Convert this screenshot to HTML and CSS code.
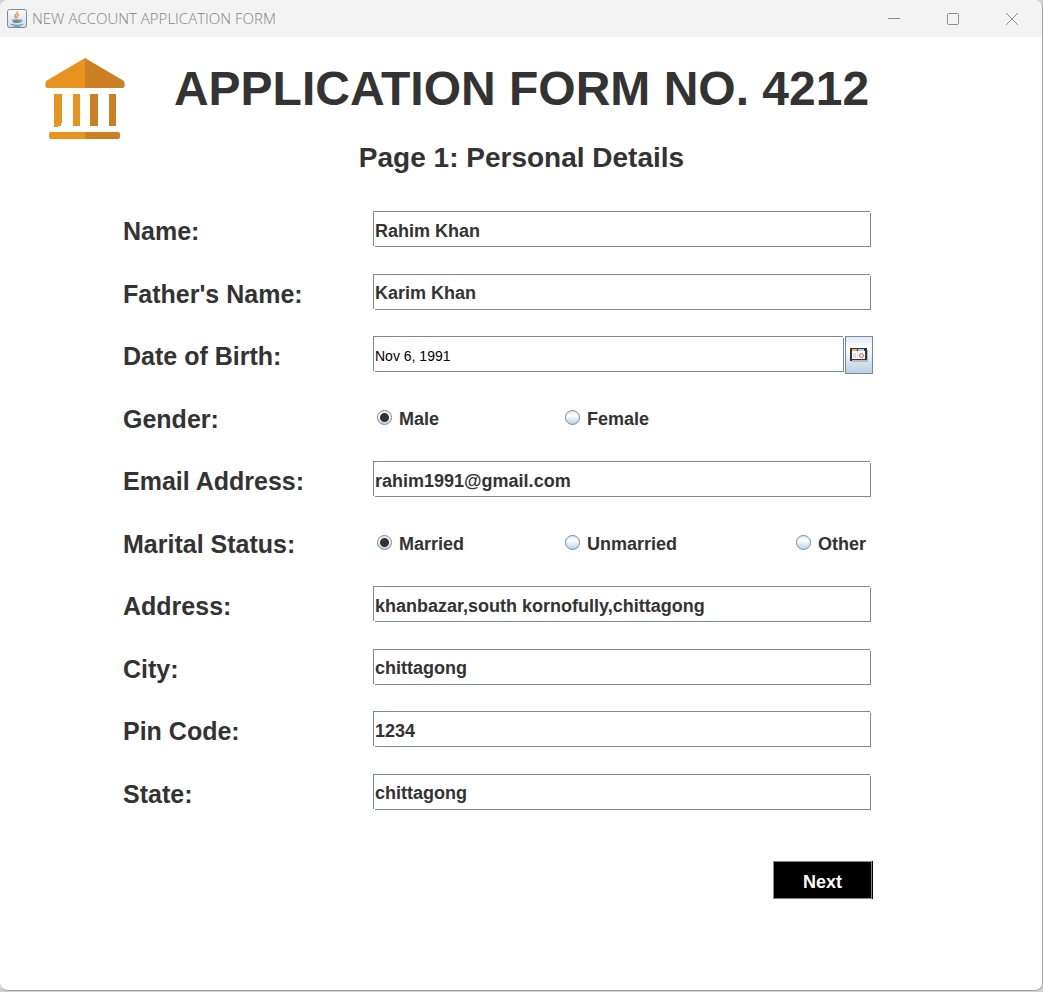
FILE: index.html
```html
<!DOCTYPE html>
<html lang="en">
<head>
<meta charset="utf-8">
<title>New Account Application Form</title>
<link rel="stylesheet" href="styles.css">
</head>
<body>
<div class="window">
  <header class="titlebar">
    <svg class="app-icon" viewBox="0 0 20 20" aria-hidden="true">
      <defs><linearGradient id="tile" x1="0" y1="0" x2="0" y2="1"><stop offset="0" stop-color="#fdfdfd"/><stop offset="1" stop-color="#cfdbe4"/></linearGradient></defs>
      <rect x=".5" y=".5" width="19" height="18" rx="2" fill="url(#tile)" stroke="#6f8da8"/>
      <path d="M10.5 2.5c1 2-3.500 3-2.500 5 .4 1 1.400 1.500 1.400 2.200M12.300 5.500c-2.300 1-2.500 2-1.700 3" fill="none" stroke="#f0923c" stroke-width="1.500"/>
      <path d="M5.500 10.500h8v1.200c0 1.500-1.500 2.300-4 2.300s-4-.8-4-2.300z" fill="#6b8ba5"/>
      <path d="M13.500 11c2.500-.6 2.300 1.700-.7 2.200M4 15.300c3 1.300 9 1.300 12 0M6.500 17c2 .5 5 .5 7 0" fill="none" stroke="#6b8ba5"/>
    </svg>
    <span class="caption">NEW ACCOUNT APPLICATION FORM</span>
    <div class="controls">
      <button type="button" aria-label="Minimize"><svg viewBox="0 0 14 14"><path d="M1 6.500h12"/></svg></button>
      <button type="button" aria-label="Maximize"><svg viewBox="0 0 14 14"><rect x="1.500" y="1.500" width="11" height="11" rx="1"/></svg></button>
      <button type="button" aria-label="Close"><svg viewBox="0 0 14 14"><path d="M1 1l12 12M13 1L1 13"/></svg></button>
    </div>
  </header>
  <main>
    <div class="heading">
      <svg class="logo" viewBox="0 0 80 82" aria-hidden="true">
        <g fill="#e8921f"><path d="M40 0L1 23Q-1 30 3 30H40z"/><path d="M9 36h8v29h-1v3h-3v1H9zM28 36h7v32h-7z"/><path d="M40 74H6q-2 0-2 2v3q0 2 2 2h34z"/></g>
        <g fill="#cd8023"><path d="M40 0l39 23q2 7-2 7H40z"/><path d="M45 36h8v32h-8zM64 36h7v32h-7z"/><path d="M40 74h33q2 0 2 2v3q0 2-2 2H40z"/></g>
      </svg>
      <div class="titles">
        <h1>APPLICATION FORM NO. 4212</h1>
        <h2>Page 1: Personal Details</h2>
      </div>
    </div>
    <form>
      <div class="rows">
        <div class="row"><label class="name" for="name">Name:</label><input class="field" id="name" type="text" value="Rahim Khan"></div>
        <div class="row"><label class="name" for="father">Father's Name:</label><input class="field" id="father" type="text" value="Karim Khan"></div>
        <div class="row"><label class="name" for="dob">Date of Birth:</label>
          <div class="date"><input class="field plain" id="dob" type="text" value="Nov 6, 1991">
            <button class="pick" type="button" aria-label="Choose date">
              <svg viewBox="0 0 18 14" shape-rendering="crispEdges"><path fill="#bbb" d="M2 2h16v12H2z"/><path fill="#333" d="M0 0h17v12H2v1H0z"/><path fill="#fff" d="M2 3h13v8H2z"/><path fill="#ffad33" d="M2 1h5v2H2z"/><path fill="#aecbfa" d="M8 1h6v2H8z"/><path fill="#ddd" d="M3 5h3v5H3zM7 4h1v6H7z"/><circle cx="11.500" cy="7.500" r="2" fill="none" stroke="#e85555" shape-rendering="auto"/></svg>
            </button></div></div>
        <div class="row" role="radiogroup" aria-labelledby="gender"><span class="name" id="gender">Gender:</span>
          <div class="options"><label><input type="radio" name="gender" checked><span>Male</span></label><label><input type="radio" name="gender"><span>Female</span></label></div></div>
        <div class="row"><label class="name" for="email">Email Address:</label><input class="field" id="email" type="email" value="rahim1991@gmail.com"></div>
        <div class="row" role="radiogroup" aria-labelledby="marital"><span class="name" id="marital">Marital Status:</span>
          <div class="options"><label><input type="radio" name="marital" checked><span>Married</span></label><label><input type="radio" name="marital"><span>Unmarried</span></label><label><input type="radio" name="marital"><span>Other</span></label></div></div>
        <div class="row"><label class="name" for="address">Address:</label><input class="field" id="address" type="text" value="khanbazar,south kornofully,chittagong"></div>
        <div class="row"><label class="name" for="city">City:</label><input class="field" id="city" type="text" value="chittagong"></div>
        <div class="row"><label class="name" for="pin">Pin Code:</label><input class="field" id="pin" type="text" value="1234"></div>
        <div class="row"><label class="name" for="state">State:</label><input class="field" id="state" type="text" value="chittagong"></div>
      </div>
      <button class="next" type="button">Next</button>
    </form>
  </main>
</div>
</body>
</html>
```
FILE: styles.css
```css
* { box-sizing: border-box; }
body {
  margin: 0;
  background: #d2d2d2;
  color: #333;
  font-family: "Liberation Sans", Arial, sans-serif;
}
.window {
  min-height: calc(100vh - 1px);
  border: solid #a3a3a3;
  border-width: 0 1px 1px 0;
  border-radius: 8px;
  background: #fff;
  overflow: hidden;
}
.titlebar {
  display: flex;
  align-items: center;
  height: 37px;
  padding-left: 7px;
  background: #f3f3f3;
}
.app-icon { width: 20px; height: 20px; }
.caption {
  margin-left: 5px;
  padding-bottom: 2px;
  color: #828282;
  font: 300 15px/20px "Open Sans", "Noto Sans", sans-serif;
}
.controls { display: flex; margin-left: auto; }
.controls button {
  display: grid;
  place-items: center;
  width: 59px;
  height: 36px;
  padding: 0 2px 0 0;
  border: 0;
  background: none;
}
.controls svg { width: 14px; height: 14px; fill: none; stroke: #8c8c8c; }

.heading {
  display: grid;
  grid-template-columns: 80px 1fr 80px;
  padding: 21px 44px 0 45px;
}
.logo { width: 80px; height: 82px; }
.titles { text-align: center; }
h1, h2 { margin: 0; white-space: nowrap; }
h1 { font-size: 48px; line-height: 62px; }
h2 { margin-top: 20px; font-size: 28px; line-height: 36px; }

form {
  display: flex;
  flex-direction: column;
  padding: 35px 169px 32px 123px;
}
.rows {
  display: grid;
  align-content: space-between;
  min-height: 599px;
}
.row {
  display: grid;
  grid-template-columns: 250px 1fr;
  height: 36px;
}
.name {
  padding-top: 4px;
  font-size: 25px;
  font-weight: bold;
  line-height: 32px;
}
.field {
  min-width: 0;
  height: 36px;
  margin: 0 2px 0 0;
  padding: 4px 2px 0;
  border: 0;
  outline: 0;
  border-radius: 0;
  color: #333;
  font: bold 18px "Liberation Sans", Arial, sans-serif;
  /* four edges, open at the bottom-left and top-right corners */
  background:
    linear-gradient(#7a8a99, #7a8a99) left top / calc(100% - 1px) 1px no-repeat,
    linear-gradient(#7a8a99, #7a8a99) left top / 1px calc(100% - 1px) no-repeat,
    linear-gradient(#7a8a99, #7a8a99) right bottom / calc(100% - 2px) 1px no-repeat,
    linear-gradient(#7a8a99, #7a8a99) right bottom / 1px calc(100% - 2px) no-repeat,
    #fff;
}
.date { display: flex; align-items: flex-start; }
.date .field { flex: 1; margin-right: 1px; }
.field.plain { color: #000; font-size: 14px; font-weight: normal; }
.pick {
  display: grid;
  place-items: center;
  width: 28px;
  height: 38px;
  padding: 0;
  border: 1px solid #7a8a99;
  background: linear-gradient(#dde8f3, #fff 30%, #b8cfe5);
}
.pick svg { width: 18px; height: 14px; }

.options {
  display: grid;
  grid-template-columns: 188px 231px auto;
  justify-content: start;
  padding: 2px 0 0 4px;
}
.options label { display: flex; align-items: center; white-space: nowrap; }
.options span { padding-top: 4px; font-size: 18px; font-weight: bold; }
.options input {
  appearance: none;
  width: 15px;
  height: 15px;
  margin: 0 7px 0 0;
  border: 1px solid #7a8a99;
  border-radius: 50%;
  background: linear-gradient(#dde8f3, #fff 35%, #b8cfe5);
}
.options input:checked {
  background:
    radial-gradient(circle, #333 4px, transparent 5px),
    linear-gradient(#dde8f3, #fff 35%, #b8cfe5);
}
.next {
  align-self: flex-end;
  width: 99px;
  height: 38px;
  margin: 51px 1px 0 0;
  padding: 4px 0 0;
  border: 1px solid #7a8a99;
  box-shadow: 1px 0 #000;
  background: #000;
  color: #fff;
  font: bold 18px "Liberation Sans", Arial, sans-serif;
}
```
